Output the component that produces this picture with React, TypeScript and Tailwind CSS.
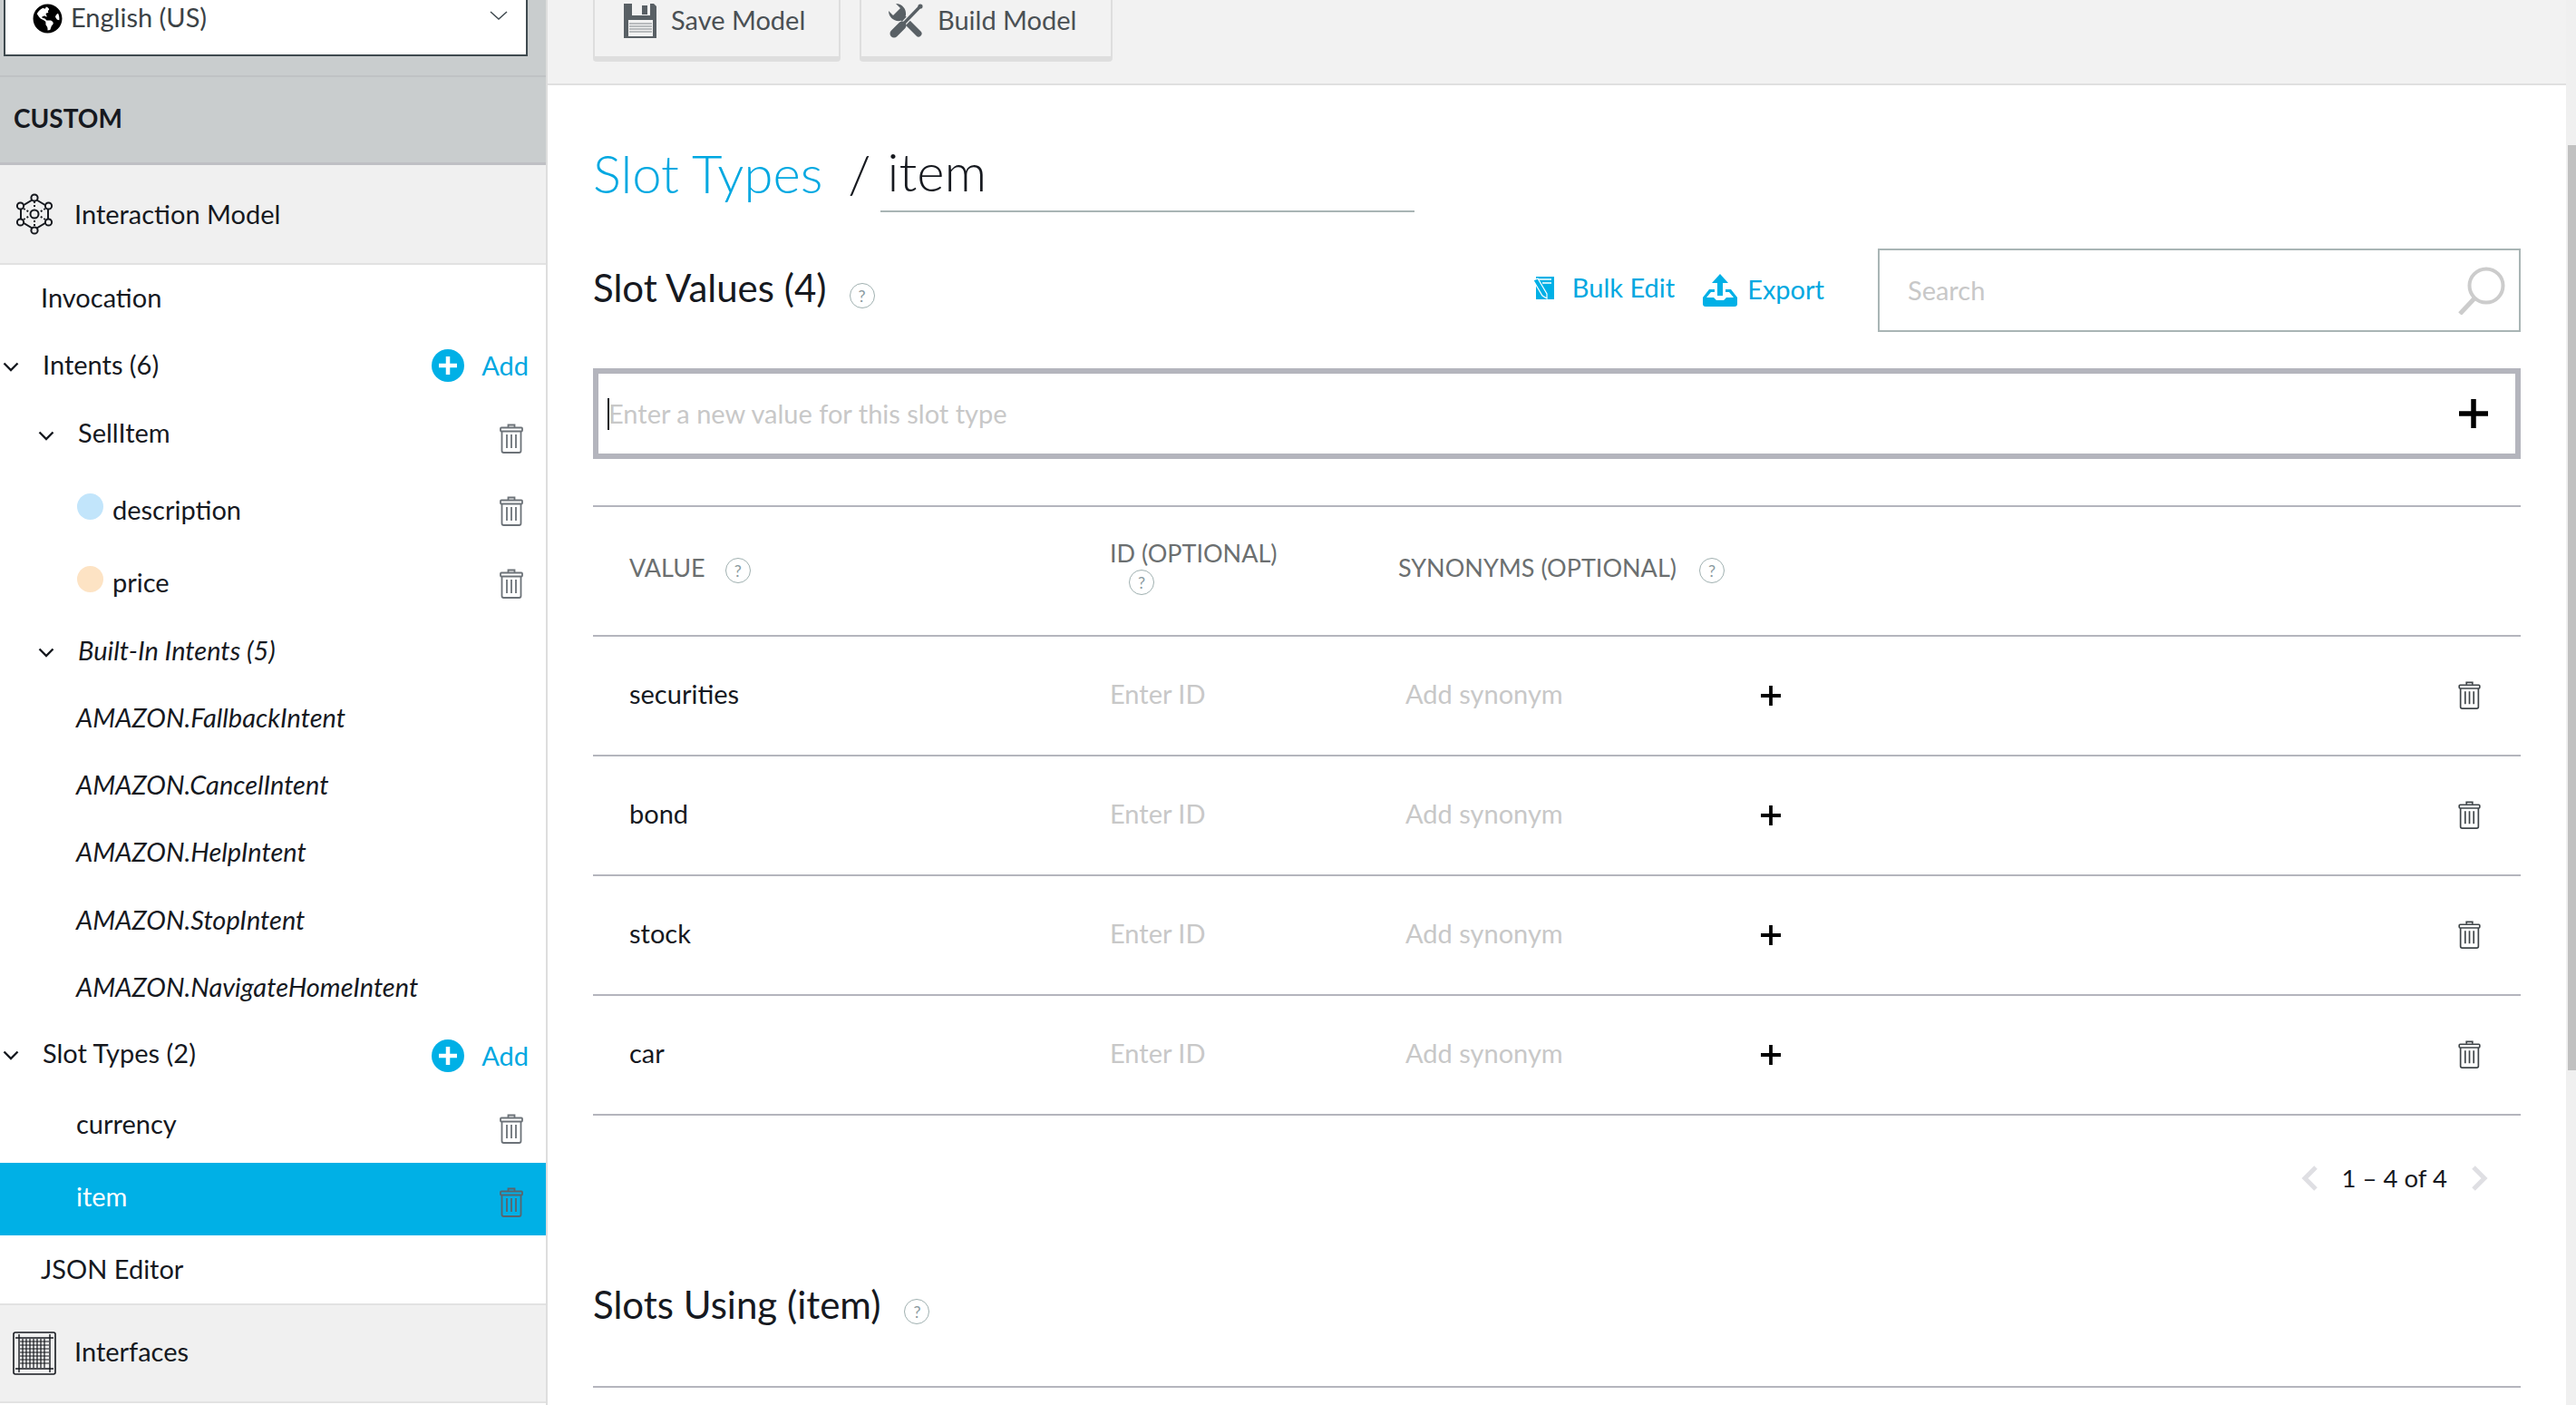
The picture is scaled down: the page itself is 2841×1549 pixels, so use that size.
import { FaGlobeAmericas } from "react-icons/fa";

const TrashIcon = ({ className }: { className: string }) => (
  <svg viewBox="0 0 26 33" fill="none" stroke="currentColor" strokeWidth="1.8" className={className}>
    <path d="M9.5 4V1.5h7V4" />
    <rect x="1" y="4.5" width="24" height="4" rx="1" />
    <path d="M2.5 8.5V30a2 2 0 0 0 2 2h17a2 2 0 0 0 2-2V8.5" />
    <path d="M8 12v15M13 12v15M18 12v15" />
  </svg>
);

const Chevron = ({ className }: { className: string }) => (
  <svg viewBox="0 0 18 11" fill="none" stroke="currentColor" strokeWidth="2.4" className={className}>
    <path d="M1.5 1.5 9 9l7.5-7.5" />
  </svg>
);

const AddIcon = () => (
  <svg viewBox="0 0 36 36" className="w-[36px] h-[36px]">
    <circle cx="18" cy="18" r="18" fill="#00b0e6" />
    <path d="M18 8v20M8 18h20" stroke="#fff" strokeWidth="4.5" />
  </svg>
);

const HelpIcon = ({ className = "" }: { className?: string }) => (
  <span className={`w-[28px] h-[28px] rounded-full border border-[#9fb0b0] flex items-center justify-center text-[18px] text-[#8a9aa0] shrink-0 ${className}`}>
    ?
  </span>
);

const PlusIcon = ({ size }: { size: string }) => (
  <svg viewBox="0 0 32 32" className={size}>
    <path d="M16 0v32M0 16h32" stroke="#000" strokeWidth="5.5" />
  </svg>
);

const GearIcon = () => (
  <svg viewBox="0 0 42 46" fill="none" stroke="#16191f" strokeWidth="2" className="w-[42px] h-[46px]">
    <path d="M21 6 36 15v16l-15 9-15-9V15z" />
    <path d="M21 9v7M21 30v7M9 17l6 3.5M33 17l-6 3.5M9 29l6-3.5M33 29l-6-3.5" strokeDasharray="2 2" />
    <g fill="#f0f0f0">
      <circle cx="21" cy="23" r="4.5" />
      <circle cx="21" cy="5" r="3.6" />
      <circle cx="21" cy="41" r="3.6" />
      <circle cx="5.5" cy="14" r="3.6" />
      <circle cx="36.5" cy="14" r="3.6" />
      <circle cx="5.5" cy="32" r="3.6" />
      <circle cx="36.5" cy="32" r="3.6" />
    </g>
  </svg>
);

const GridIcon = () => (
  <svg viewBox="0 0 48 48" fill="none" stroke="#16191f" className="w-[48px] h-[48px]">
    <rect x="1" y="1" width="46" height="46" rx="2" strokeWidth="1.6" />
    <path d="M3 7h42M3 41h42M7 3v42M41 3v42" strokeWidth="1.4" />
    <path d="M8 11h32M8 15h32M8 19h32M8 23h32M8 27h32M8 31h32M8 35h32" strokeWidth="1.2" />
    <path d="M11 8v32M15 8v32M19 8v32M23 8v32M27 8v32M31 8v32M35 8v32" strokeWidth="1.2" />
  </svg>
);

const SaveIcon = () => (
  <svg viewBox="0 0 36 38" className="w-[36px] h-[38px]">
    <path d="M0 0h33l3 3v35H0z" fill="#596065" />
    <rect x="9" y="0" width="20" height="13" fill="#f2f2f2" />
    <rect x="20" y="2" width="6" height="10" fill="#596065" />
    <rect x="5" y="18" width="27" height="18" fill="#f2f2f2" />
    <path d="M6 22h25M6 25h25M6 28h25M6 31h25" stroke="#a5a9ac" strokeWidth="1.4" />
  </svg>
);

const BuildIcon = () => (
  <svg viewBox="0 0 38 39" className="w-[38px] h-[39px]">
    <path d="M8 0 13 5 5 13 0 8C0 15 6 20 13 19L19 13C20 6 15 0 8 0Z" fill="#596065" />
    <path d="M14 14 33 33" stroke="#596065" strokeWidth="7" strokeLinecap="round" />
    <path d="M35 3 6 33" stroke="#f2f2f2" strokeWidth="6" />
    <path d="M35 3 6 33" stroke="#596065" strokeWidth="3.4" />
    <path d="M15 24 6 33" stroke="#596065" strokeWidth="9" strokeLinecap="round" />
    <circle cx="35" cy="3" r="2.6" fill="#596065" />
  </svg>
);

const BulkIcon = () => (
  <svg viewBox="0 0 26 25" className="w-[26px] h-[25px]">
    <rect x="5" y="0" width="20" height="25" fill="#00b0e6" />
    <path d="M8 3h14M12 7h10" stroke="#fff" strokeWidth="1.4" />
    <path d="M2 4 7 2l10 17 0 5-5-3z" fill="#00b0e6" stroke="#fff" strokeWidth="1.2" />
  </svg>
);

const ExportIcon = () => (
  <svg viewBox="0 0 40 36" className="w-[40px] h-[36px]">
    <path d="M20 0 29 10h-6v14h-6V10h-6z" fill="#00b0e6" />
    <path d="M8 17h6v3h-4l-5 6h8l3 3h8l3-3h8l-5-6h-4v-3h6l7 9v7a3 3 0 0 1-3 3H4a3 3 0 0 1-3-3v-7z" fill="#00b0e6" />
  </svg>
);

const SearchIcon = () => (
  <svg viewBox="0 0 52 53" fill="none" stroke="#cccccc" className="w-[52px] h-[53px]">
    <circle cx="31" cy="21" r="18.5" strokeWidth="4" />
    <path d="M18 35 2 52" strokeWidth="5" />
  </svg>
);

const SideRow = ({ h, pl, italic, active, y = "-translate-y-[1px]", children, right }: any) => (
  <div className={`${h} ${pl} flex items-center justify-between pr-[19px] ${italic ? "italic" : ""} ${active ? "bg-[#00b0e6] text-white" : "text-[#16191f]"}`}>
    <div className={`flex items-center ${y}`}>{children}</div>
    {right}
  </div>
);

const Rows = ["securities", "bond", "stock", "car"];

const App = () => {
  return (
    <div className="flex w-[2841px] h-[1549px] overflow-hidden bg-white font-['Lato',sans-serif] text-[29px] text-[#16191f]">
      <aside className="w-[604px] shrink-0 border-r-2 border-[#dedede] flex flex-col">
        <div className="h-[83px] bg-[#c9cdce] pl-[4px] pr-[20px]">
          <div className="h-[62px] bg-white border-x-2 border-b-2 border-[#3f4a4f] flex items-start pl-[30px] pr-[20px] justify-between">
            <div className="flex items-center gap-[9px] text-[#3b4246]">
              <FaGlobeAmericas className="w-[33px] h-[33px] text-black mt-[4px]" />
              <span className="leading-[32px]">English (US)</span>
            </div>
            <svg viewBox="0 0 20 10" fill="none" stroke="#3f4a4f" strokeWidth="1.5" className="w-[20px] h-[10px] mt-[12px]">
              <path d="M1 1l9 8 9-8" />
            </svg>
          </div>
        </div>
        <div className="h-[99px] bg-[#c9cdce] border-y-2 border-b-[3px] border-t-[#bfc2c4] border-b-[#bfbfc4] flex items-center pl-[15px] font-bold text-[28px] text-[#16191f]">
          <span className="-translate-y-[2px]">CUSTOM</span>
        </div>
        <div className="h-[110px] bg-[#f0f0f0] border-b-2 border-[#e2e2e2] flex items-center pl-[17px] gap-[23px]">
          <GearIcon />
          <span>Interaction Model</span>
        </div>
        <SideRow h="h-[73px]" pl="pl-[45px]">Invocation</SideRow>
        <SideRow
          h="h-[75px]"
          pl="pl-[3px]"
          right={
            <div className="flex items-center gap-[19px] text-[#00a8e1]">
              <AddIcon />
              <span>Add</span>
            </div>
          }
        >
          <Chevron className="w-[18px] h-[11px] mr-[26px] mt-[6px]" />
          Intents (6)
        </SideRow>
        <SideRow h="h-[80px]" pl="pl-[42px]" y="-translate-y-[3px]" right={<TrashIcon className="w-[26px] h-[33px] text-[#6c7278] mt-[6px] mr-[6px]" />}>
          <Chevron className="w-[18px] h-[11px] mr-[26px] mt-[6px]" />
          SellItem
        </SideRow>
        <SideRow h="h-[81px]" pl="pl-[85px]" y="translate-y-[1px]" right={<TrashIcon className="w-[26px] h-[33px] text-[#6c7278] mt-[6px] mr-[6px]" />}>
          <span className="w-[29px] h-[29px] rounded-full bg-[#c2e5fb] mr-[10px] -mt-[6px]" />
          description
        </SideRow>
        <SideRow h="h-[79px]" pl="pl-[85px]" y="translate-y-[1px]" right={<TrashIcon className="w-[26px] h-[33px] text-[#6c7278] mt-[6px] mr-[6px]" />}>
          <span className="w-[29px] h-[29px] rounded-full bg-[#fde3c4] mr-[10px] -mt-[6px]" />
          price
        </SideRow>
        <SideRow h="h-[75px]" pl="pl-[42px]" italic>
          <Chevron className="w-[18px] h-[11px] mr-[26px] mt-[6px]" />
          Built-In Intents (5)
        </SideRow>
        <SideRow h="h-[74px]" pl="pl-[84px]" italic>AMAZON.FallbackIntent</SideRow>
        <SideRow h="h-[74px]" pl="pl-[84px]" italic>AMAZON.CancelIntent</SideRow>
        <SideRow h="h-[74px]" pl="pl-[84px]" italic>AMAZON.HelpIntent</SideRow>
        <SideRow h="h-[75px]" pl="pl-[84px]" italic>AMAZON.StopIntent</SideRow>
        <SideRow h="h-[74px]" pl="pl-[84px]" italic>AMAZON.NavigateHomeIntent</SideRow>
        <SideRow
          h="h-[75px]"
          pl="pl-[3px]"
          y="-translate-y-[3px]"
          right={
            <div className="flex items-center gap-[19px] text-[#00a8e1]">
              <AddIcon />
              <span>Add</span>
            </div>
          }
        >
          <Chevron className="w-[18px] h-[11px] mr-[26px] mt-[6px]" />
          Slot Types (2)
        </SideRow>
        <SideRow h="h-[81px]" pl="pl-[84px]" y="-translate-y-[3px]" right={<TrashIcon className="w-[26px] h-[33px] text-[#6c7278] mt-[6px] mr-[6px]" />}>currency</SideRow>
        <SideRow h="h-[80px]" pl="pl-[84px]" y="-translate-y-[3px]" active right={<TrashIcon className="w-[26px] h-[33px] text-[#5a646c] mt-[6px] mr-[6px]" />}>item</SideRow>
        <SideRow h="h-[75px]" pl="pl-[45px]">JSON Editor</SideRow>
        <div className="h-[110px] bg-[#f0f0f0] border-y-2 border-[#e2e2e2] flex items-center pl-[14px] gap-[20px]">
          <GridIcon />
          <span className="-translate-y-[2px]">Interfaces</span>
        </div>
      </aside>

      <main className="flex-1 flex flex-col min-w-0">
        <div className="h-[94px] shrink-0 bg-[#f2f2f2] border-b-2 border-[#e0e0e0] flex items-start pl-[50px] gap-[21px]">
          <div className="w-[273px] h-[68px] bg-[#f2f2f2] border-x-2 border-b-[6px] border-[#dedede] rounded-b-[4px] flex items-start pl-[32px] pt-[4px] gap-[16px] text-[#4a5054]">
            <SaveIcon />
            <span className="leading-[36px]">Save Model</span>
          </div>
          <div className="w-[279px] h-[68px] bg-[#f2f2f2] border-x-2 border-b-[6px] border-[#dedede] rounded-b-[4px] flex items-start pl-[30px] pt-[4px] gap-[16px] text-[#4a5054]">
            <BuildIcon />
            <span className="leading-[36px]">Build Model</span>
          </div>
        </div>

        <div className="px-[50px] flex-1 flex flex-col">
          <div className="flex items-end h-[140px] font-light text-[58px] leading-none">
            <span className="text-[#00a8e1] pb-[14px]">Slot Types</span>
            <span className="ml-[28px] pb-[14px]">/</span>
            <div className="ml-[10px] w-[589px] border-b-2 border-[#a9b5b5] pl-[8px] pb-[14px]">item</div>
          </div>

          <div className="flex items-center justify-between h-[92px] mt-[40px]">
            <div className="flex items-center">
              <span className="text-[42px] -translate-y-[3px]">Slot Values (4)</span>
              <HelpIcon className="ml-[25px] mt-[12px]" />
            </div>
            <div className="flex items-center">
              <div className="flex items-center text-[#00a8e1] mr-[30px] -mt-[6px]">
                <BulkIcon />
                <span className="ml-[19px]">Bulk Edit</span>
              </div>
              <div className="flex items-center text-[#00a8e1] mr-[59px]">
                <ExportIcon />
                <span className="ml-[10px] -translate-y-[1px]">Export</span>
              </div>
              <div className="w-[709px] h-[92px] border-2 border-[#a9b5b5] flex items-center justify-between pl-[31px] pr-[15px] text-[#c8c8c8]">
                <span>Search</span>
                <SearchIcon />
              </div>
            </div>
          </div>

          <div className="h-[100px] mt-[40px] border-[6px] border-[#b4b5bd] flex items-center justify-between pl-[10px] pr-[30px]">
            <div className="flex items-center text-[#c8c8c8]">
              <span className="w-[2px] h-[35px] bg-[#16191f]" />
              <span className="-ml-[1px]">Enter a new value for this slot type</span>
            </div>
            <PlusIcon size="w-[32px] h-[32px]" />
          </div>

          <div className="mt-[51px] border-t-2 border-[#b4b5bd] h-[143px] flex items-center pl-[40px] text-[27px] text-[#6b6f70]">
            <div className="w-[530px] flex items-center -mt-[7px]">
              VALUE
              <HelpIcon className="ml-[22px] mt-[6px]" />
            </div>
            <div className="w-[318px] flex flex-col items-start -mt-[8px]">
              <span className="leading-[34px] -translate-y-[2px]">ID (OPTIONAL)</span>
              <HelpIcon className="ml-[21px] -mt-[1px]" />
            </div>
            <div className="flex items-center -mt-[7px]">
              SYNONYMS (OPTIONAL)
              <HelpIcon className="ml-[25px] mt-[6px]" />
            </div>
          </div>

          {Rows.map((row) => (
            <div key={row} className="h-[132px] shrink-0 border-t-2 border-[#b4b5bd] flex items-center pl-[40px] pr-[44px]">
              <div className="w-[530px] -mt-[5px]">{row}</div>
              <div className="w-[318px] text-[#c8c8c8] -mt-[5px]">Enter ID</div>
              <div className="w-[400px] pl-[8px] text-[#c8c8c8] -mt-[5px]">Add synonym</div>
              <PlusIcon size="w-[22px] h-[22px]" />
              <TrashIcon className="w-[25px] h-[31px] text-[#3f4549] ml-auto -mt-[2px]" />
            </div>
          ))}

          <div className="border-t-2 border-[#b4b5bd] h-[140px] flex items-center justify-end pr-[36px] gap-[27px] text-[27.5px]">
            <svg viewBox="0 0 18 28" fill="none" stroke="#dfdfe3" strokeWidth="5" className="w-[18px] h-[28px]">
              <path d="M16 2 4 14l12 12" />
            </svg>
            <span>1 – 4 of 4</span>
            <svg viewBox="0 0 18 28" fill="none" stroke="#dfdfe3" strokeWidth="5" className="w-[18px] h-[28px]">
              <path d="M2 2l12 12L2 26" />
            </svg>
          </div>

          <div className="h-[160px] flex items-center">
            <span className="text-[42px] -mt-[20px]">Slots Using (item)</span>
            <HelpIcon className="ml-[26px] -mt-[4px]" />
          </div>
          <div className="border-t-2 border-[#b4b5bd]" />
        </div>
      </main>

      <div className="w-[11px] shrink-0 bg-[#f0f0f0] pl-[2px] pt-[160px]">
        <div className="h-[1020px] bg-[#c1c1c1]" />
      </div>
    </div>
  );
};

export default App;
